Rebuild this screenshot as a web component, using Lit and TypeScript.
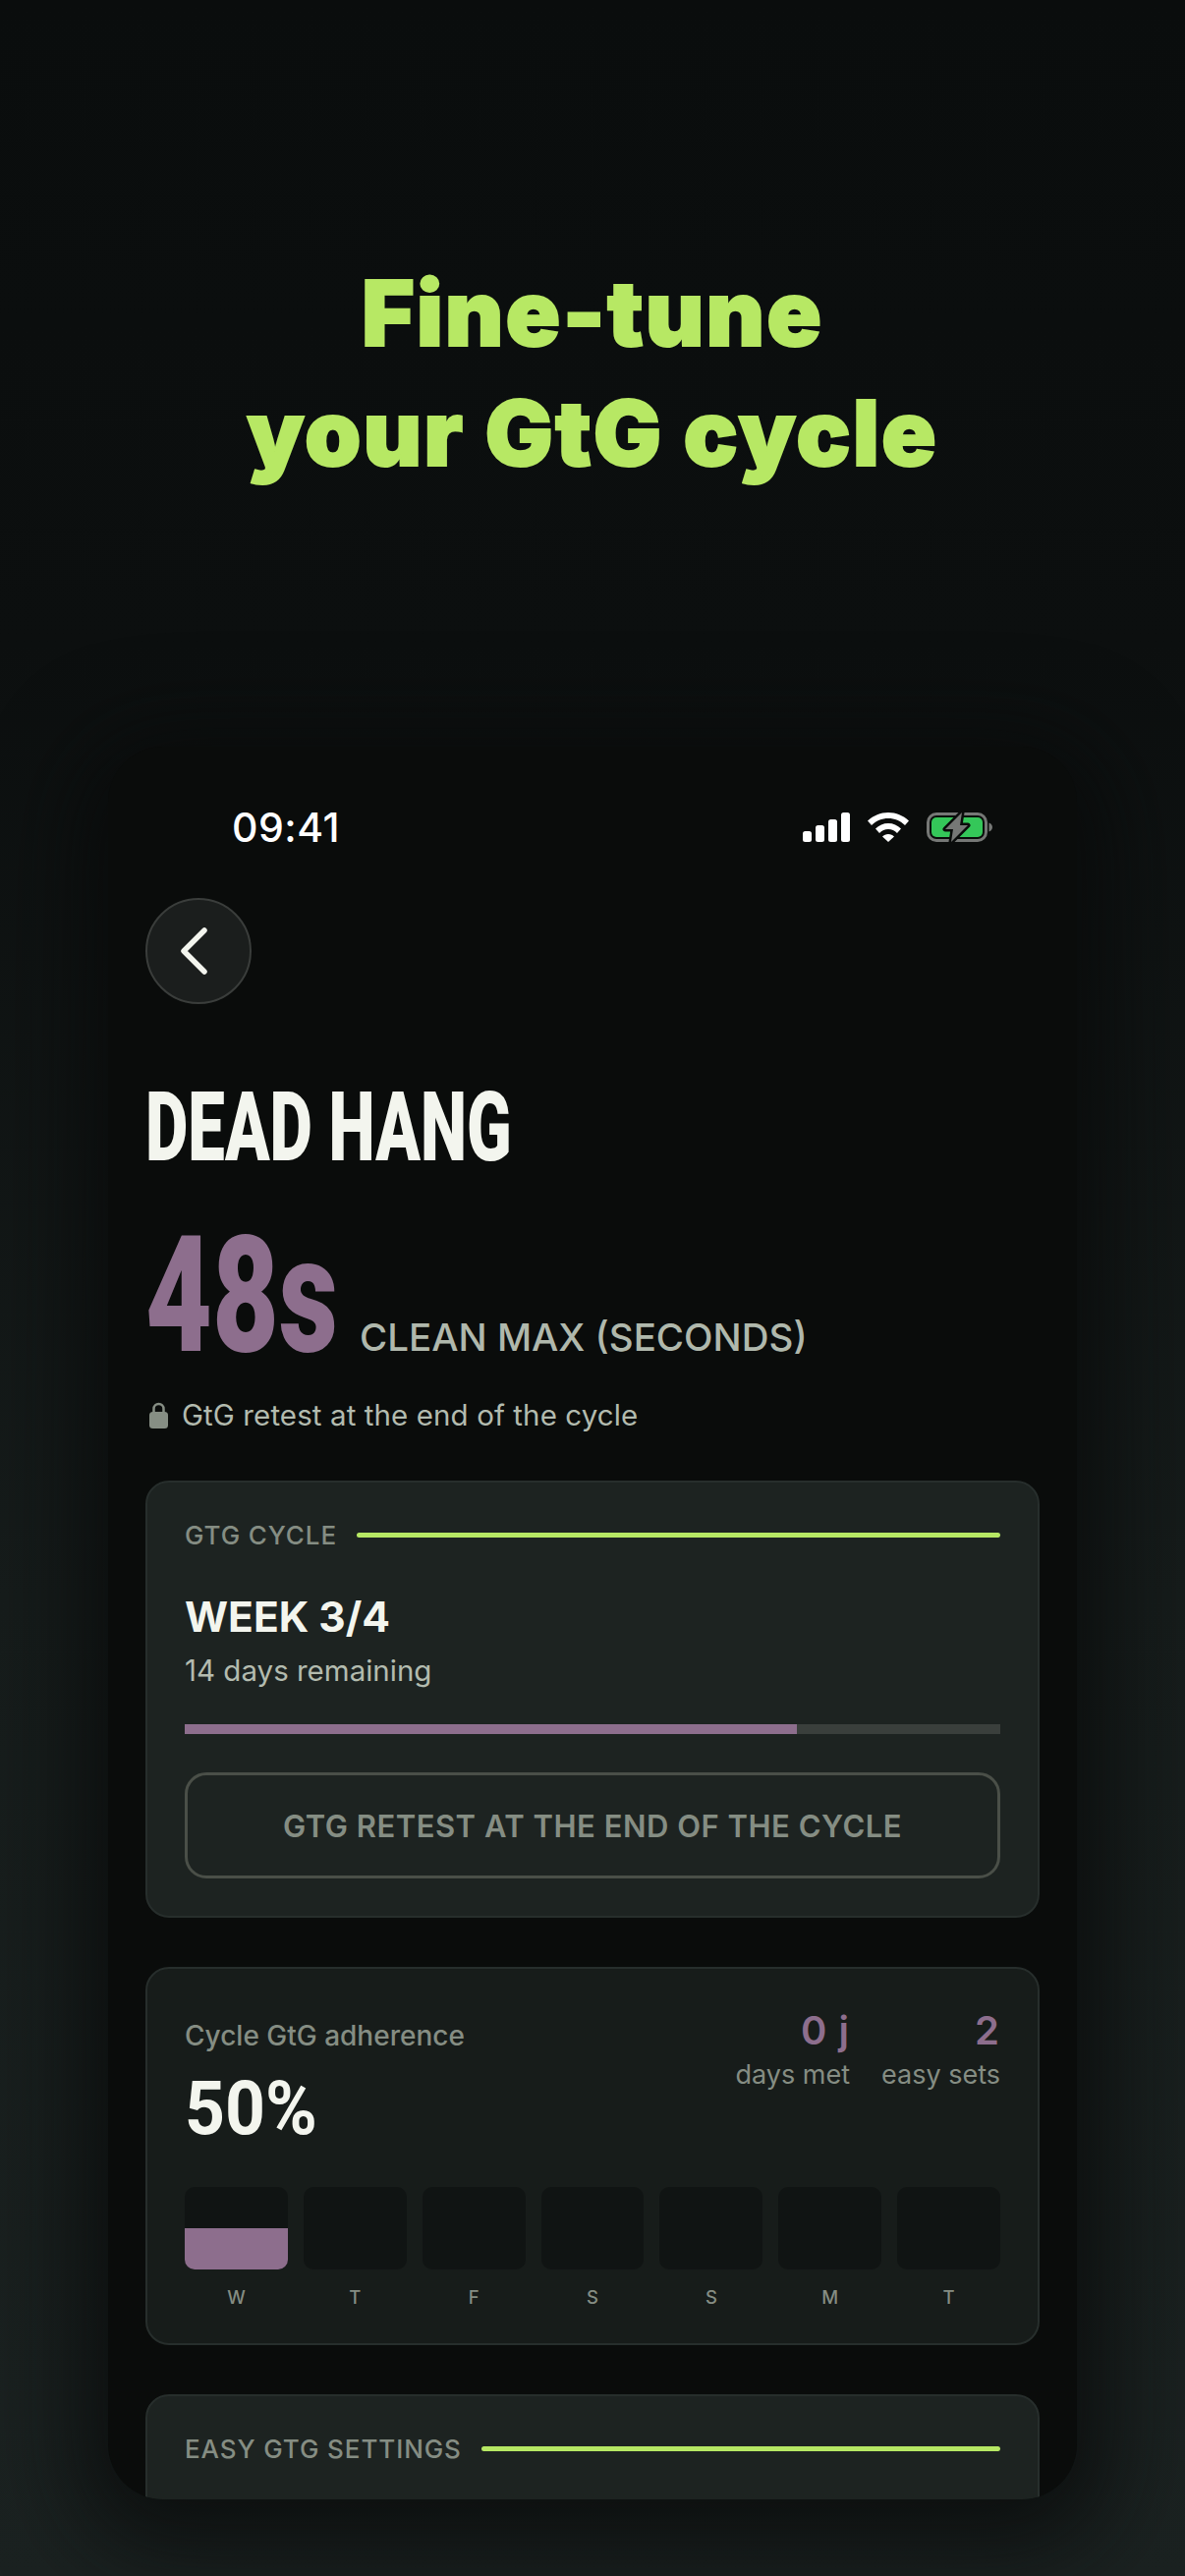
import { LitElement, html, css, svg } from "lit";
import { customElement } from "lit/decorators.js";

const days = ["W", "T", "F", "S", "S", "M", "T"];

@customElement("app-root")
export class AppRoot extends LitElement {
  static styles = css`
    :host {
      display: block;
      width: 1206px;
      height: 2622px;
      overflow: hidden;
      font-family: Inter, "Liberation Sans", sans-serif;
      background: linear-gradient(180deg, #0a0d0d 0%, #0c0f0f 25%, #161c1b 62%, #1b2221 100%);
    }
    .title {
      height: 760px;
      box-sizing: border-box;
      padding-top: 258px;
      margin: 0;
      text-align: center;
      font-size: 92px;
      line-height: 122px;
      font-weight: 900;
      letter-spacing: 2px;
      color: #b7e864;
      -webkit-text-stroke: 2px #b7e864;
    }
    .phone {
      width: 986px;
      height: 1784px;
      margin-left: 110px;
      box-sizing: border-box;
      padding: 0 38px;
      background: #0a0c0b;
      border-radius: 56px;
      overflow: hidden;
      box-shadow: 0 20px 90px 30px rgba(8, 10, 10, 0.75);
    }
    .status {
      height: 36px;
      margin: 64px 47px 0 88px;
      display: flex;
      align-items: center;
      justify-content: space-between;
    }
    .time { font-size: 41px; font-weight: 500; color: #fff; letter-spacing: 0.5px; }
    .icons { display: flex; align-items: center; gap: 18px; }
    .icons svg { display: block; }
    .back {
      width: 108px;
      height: 108px;
      margin-top: 54px;
      box-sizing: border-box;
      border: 2px solid #3a3d3b;
      border-radius: 50%;
      background: #1b1e1d;
      display: flex;
      align-items: center;
      justify-content: center;
    }
    .back svg { margin-right: 10px; }
    .cond {
      font-family: Roboto, "Liberation Sans", sans-serif;
      transform-origin: left center;
      display: block;
      white-space: nowrap;
    }
    .name {
      margin-top: 81px;
      font-size: 98px;
      line-height: 90px;
      font-weight: 900;
      color: #f3f5ee;
      transform: scaleX(0.684);
    }
    .max { display: flex; align-items: baseline; margin-top: 61px; height: 130px; }
    .big {
      width: 218px;
      flex: none;
      font-size: 165px;
      line-height: 130px;
      font-weight: 900;
      color: #8d6e8d;
      transform: scaleX(0.71);
    }
    .max-label { font-size: 38.5px; font-weight: 500; color: #b0b8ac; white-space: nowrap; }
    .note { display: flex; align-items: center; gap: 14px; margin-top: 36px; height: 40px; font-size: 29.5px; color: #b3bbaf; letter-spacing: 0.1px; }
    .note svg { margin-left: 4px; }
    .card {
      box-sizing: border-box;
      border: 2px solid #272e2c;
      border-radius: 24px;
      padding: 0 38px;
      background: #1d2321;
    }
    .c1 { height: 445px; margin-top: 47px; }
    .c2 { height: 385px; margin-top: 50px; background: #171c1a; }
    .c3 { height: 300px; margin-top: 50px; }
    .sec { display: flex; align-items: center; gap: 20px; padding-top: 35px; height: 36px; font-size: 26px; font-weight: 500; color: #858d83; letter-spacing: 0.9px; white-space: nowrap; box-sizing: content-box; }
    .rule { flex: 1; height: 5px; border-radius: 3px; background: #b7e864; }
    .week { margin-top: 38px; font-size: 42.5px; line-height: 56px; font-weight: 700; color: #f3f5ee; }
    .left { margin-top: 6px; font-size: 29.5px; line-height: 40px; color: #b3bbaf; }
    .track { margin-top: 35px; height: 10px; background: #3a3f3c; }
    .fill { height: 100%; background: #8d6e8d; }
    .btn {
      margin-top: 39px;
      height: 108px;
      box-sizing: border-box;
      border: 3px solid #4a4f48;
      border-radius: 22px;
      display: flex;
      align-items: center;
      justify-content: center;
      font-size: 31px;
      font-weight: 600;
      color: #858d83;
      letter-spacing: 0.5px;
    }
    .top { display: flex; justify-content: space-between; height: 222px; }
    .adh { padding-top: 48px; font-size: 28px; line-height: 40px; font-weight: 500; color: #858d83; }
    .pct { margin-top: 14px; font-size: 76px; line-height: 80px; font-weight: 700; color: #f3f5ee; transform: scaleX(0.94); }
    .stats { display: flex; gap: 32px; padding-top: 37px; }
    .stat { text-align: right; }
    .num { font-size: 40px; line-height: 51px; font-weight: 600; color: #8d6e8d; letter-spacing: 1px; }
    .lbl { font-size: 27px; line-height: 40px; color: #858d83; }
    .bars { display: grid; grid-template-columns: repeat(7, 1fr); gap: 16px; }
    .bar { height: 84px; border-radius: 10px; background: #101413; overflow: hidden; display: flex; align-items: flex-end; }
    .barfill { width: 100%; background: #8d6e8d; }
    .day { margin-top: 14px; text-align: center; font-size: 18.5px; line-height: 28px; font-weight: 500; color: #858d83; }
  `;

  private battery() {
    return svg`<svg width="68" height="32" viewBox="0 0 68 32">
      <rect x="1.5" y="2.5" width="59" height="27" rx="8.5" fill="none" stroke="#767876" stroke-width="3"/>
      <rect x="5" y="6" width="52" height="20" rx="5" fill="#34c759"/>
      <path d="M63.5 11.5c2.5 1 3.5 2.700 3.500 4.500s-1 3.500-3.500 4.500z" fill="#767876"/>
      <path d="M36 1 19 18h8l-2 13 17-17h-8z" fill="#767876" stroke="#0a0c0b" stroke-width="5" stroke-linejoin="round" paint-order="stroke"/>
    </svg>`;
  }

  render() {
    return html`
      <h1 class="title">Fine-tune<br />your GtG cycle</h1>
      <section class="phone">
        <div class="status">
          <span class="time">09:41</span>
          <div class="icons">
            <svg width="48" height="30" viewBox="0 0 48 30" fill="#fff">
              <rect x="0" y="19" width="9" height="11" rx="2.500"/>
              <rect x="13" y="13" width="9" height="17" rx="2.500"/>
              <rect x="26" y="7" width="9" height="23" rx="2.500"/>
              <rect x="39" y="0" width="9" height="30" rx="2.500"/>
            </svg>
            <svg width="42" height="30" viewBox="0 0 42 30" fill="#fff">
              <path d="M21 0C13 0 6 3 0 8.500l4 4.500C8.500 8.500 14.500 6 21 6s12.500 2.500 17 7l4-4.500C36 3 29 0 21 0z"/>
              <path d="M21 11c-5 0-9.500 2-13 5.500l4 4.500c2.500-2.500 5.500-4 9-4s6.500 1.500 9 4l4-4.500C30.500 13 26 11 21 11z"/>
              <path d="M21 22c-2.500 0-4.500 1-6 2.500L21 30l6-5.500C25.500 23 23.500 22 21 22z"/>
            </svg>
            ${this.battery()}
          </div>
        </div>
        <div class="back">
          <svg width="34" height="50" viewBox="0 0 34 50" fill="none">
            <path d="M28 4 7 25l21 21" stroke="#f3f5ee" stroke-width="5.500" stroke-linecap="round" stroke-linejoin="round"/>
          </svg>
        </div>
        <div class="cond name">DEAD HANG</div>
        <div class="max">
          <span class="cond big">48s</span>
          <span class="max-label">CLEAN MAX (SECONDS)</span>
        </div>
        <div class="note">
          <svg width="19" height="27" viewBox="0 0 19 27">
            <path d="M4.500 11V7a5 5 0 0 1 10 0v4" fill="none" stroke="#868e84" stroke-width="2.500"/>
            <rect x="0" y="10" width="19" height="17" rx="3.500" fill="#868e84"/>
          </svg>
          <span>GtG retest at the end of the cycle</span>
        </div>
        <div class="card c1">
          <div class="sec"><span>GTG CYCLE</span><div class="rule"></div></div>
          <div class="week">WEEK 3/4</div>
          <div class="left">14 days remaining</div>
          <div class="track"><div class="fill" style="width:75%"></div></div>
          <div class="btn">GTG RETEST AT THE END OF THE CYCLE</div>
        </div>
        <div class="card c2">
          <div class="top">
            <div>
              <div class="adh">Cycle GtG adherence</div>
              <div class="cond pct">50%</div>
            </div>
            <div class="stats">
              <div class="stat"><div class="num">0 j</div><div class="lbl">days met</div></div>
              <div class="stat"><div class="num">2</div><div class="lbl">easy sets</div></div>
            </div>
          </div>
          <div class="bars">
            ${days.map(
              (d, i) => html`<div>
                <div class="bar"><div class="barfill" style="height:${i === 0 ? 50 : 0}%"></div></div>
                <div class="day">${d}</div>
              </div>`
            )}
          </div>
        </div>
        <div class="card c3">
          <div class="sec"><span>EASY GTG SETTINGS</span><div class="rule"></div></div>
        </div>
      </section>
    `;
  }
}
